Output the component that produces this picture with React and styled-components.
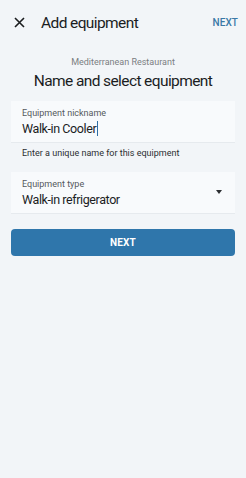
import React from "react";
import styled, { createGlobalStyle } from "styled-components";

const Global = createGlobalStyle`
  html, body {
    margin: 0;
    padding: 0;
    background: #f2f5f8;
  }
  body {
    font-family: Roboto, "Noto Sans", Arial, sans-serif;
    color: #1d1f21;
  }
`

const Page = styled.div`
  width: 246px;
  min-height: 478px;
  background: #f2f5f8;
  display: flex;
  flex-direction: column;
`

const TopBar = styled.div`
  height: 45px;
  display: flex;
  align-items: center;
  padding: 0 8px 0 12px;
`

const CloseButton = styled.div`
  width: 14px;
  height: 14px;
  display: flex;
  align-items: center;
  justify-content: center;
  margin-right: 15px;
`

const Title = styled.div`
  flex: 1;
  font-size: 15.5px;
  letter-spacing: -0.6px;
  color: #1b1d1f;
`

const TopAction = styled.div`
  font-size: 10px;
  font-weight: 500;
  color: #3a78a6;
  letter-spacing: 0.1px;
`

const Heading = styled.div`
  display: flex;
  flex-direction: column;
  align-items: center;
  padding-top: 12px;
`

const SubTitle = styled.div`
  font-size: 9px;
  color: #7b7e82;
`

const MainTitle = styled.div`
  font-size: 15.5px;
  letter-spacing: -0.6px;
  color: #1b1d1f;
  margin-top: 5px;
`

const Form = styled.div`
  padding: 0 11px;
  margin-top: 11px;
  display: flex;
  flex-direction: column;
`

const Field = styled.div`
  background: #f8fafc;
  border-bottom: 1px solid #e6eaee;
  height: 42px;
  padding: 1px 11px 0;
  box-sizing: border-box;
  display: flex;
  align-items: center;
  margin-top: ${p => p.gap || 0}px;
`

const FieldText = styled.div`
  flex: 1;
  display: flex;
  flex-direction: column;
`

const Label = styled.div`
  font-size: 9px;
  color: #55595d;
  line-height: 11px;
`

const Value = styled.div`
  font-size: 12.5px;
  letter-spacing: -0.4px;
  color: #1b1d1f;
  line-height: 16px;
  margin-top: 2px;
  display: flex;
  align-items: center;
`

const Caret = styled.span`
  display: inline-block;
  width: 1px;
  height: 15px;
  background: #2f6fa5;
  margin-left: 1px;
`

const Helper = styled.div`
  font-size: 9px;
  color: #2b2e31;
  padding: 5px 11px 0;
  line-height: 11px;
`

const Arrow = styled.div`
  width: 0;
  height: 0;
  border-left: 3.5px solid transparent;
  border-right: 3.5px solid transparent;
  border-top: 4px solid #2b2e31;
  margin-right: 2px;
  margin-top: -2px;
`

const PrimaryButton = styled.button`
  margin-top: 15px;
  height: 27px;
  border: none;
  border-radius: 4px;
  background: #2f76ab;
  color: #ffffff;
  font-family: Roboto, Arial, sans-serif;
  font-size: 10px;
  font-weight: 700;
  letter-spacing: 0.2px;
`

const App = () => {
    return (
        <Page>
            <Global />
            <TopBar>
                <CloseButton>
                    <svg width="11" height="11" viewBox="0 0 11 11">
                        <path d="M1 1L10 10M10 1L1 10" stroke="#1b1d1f" strokeWidth="1.6" />
                    </svg>
                </CloseButton>
                <Title>Add equipment</Title>
                <TopAction>NEXT</TopAction>
            </TopBar>
            <Heading>
                <SubTitle>Mediterranean Restaurant</SubTitle>
                <MainTitle>Name and select equipment</MainTitle>
            </Heading>
            <Form>
                <Field>
                    <FieldText>
                        <Label>Equipment nickname</Label>
                        <Value>Walk-in Cooler<Caret /></Value>
                    </FieldText>
                </Field>
                <Helper>Enter a unique name for this equipment</Helper>
                <Field gap={13}>
                    <FieldText>
                        <Label>Equipment type</Label>
                        <Value>Walk-in refrigerator</Value>
                    </FieldText>
                    <Arrow />
                </Field>
                <PrimaryButton>NEXT</PrimaryButton>
            </Form>
        </Page>
    );
}

export default App;
